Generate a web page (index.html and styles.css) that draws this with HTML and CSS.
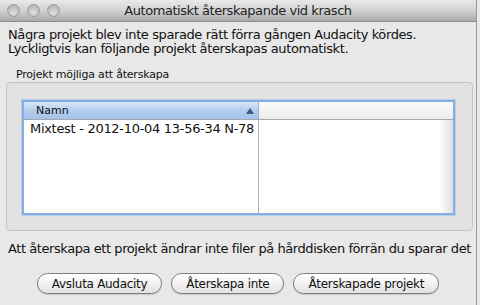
FILE: index.html
```html
<!doctype html>
<html>
<head>
<meta charset="utf-8">
<title>Automatiskt återskapande vid krasch</title>
<link rel="stylesheet" href="styles.css">
</head>
<body>

<div class="window">
    <div class="titlebar">
        <div class="lights">
            <span class="light"></span>
            <span class="light"></span>
            <span class="light"></span>
        </div>
        <div class="title">Automatiskt återskapande vid krasch</div>
    </div>

    <div class="content">
        <p class="intro">Några projekt blev inte sparade rätt förra gången Audacity kördes.<br>Lyckligtvis kan följande projekt återskapas automatiskt.</p>

        <div class="group-label">Projekt möjliga att återskapa</div>
        <div class="group">
            <div class="list">
                <div class="head">
                    <div class="col col-name">Namn <span class="sort"></span></div>
                    <div class="col col-rest"></div>
                </div>
                <div class="rows">
                    <div class="col col-name">Mixtest - 2012-10-04 13-56-34 N-78</div>
                    <div class="col col-rest"><span class="shade"></span></div>
                </div>
            </div>
        </div>

        <p class="note">Att återskapa ett projekt ändrar inte filer på hårddisken förrän du sparar det</p>

        <div class="buttons">
            <button type="button" class="btn">Avsluta Audacity</button>
            <button type="button" class="btn">Återskapa inte</button>
            <button type="button" class="btn">Återskapade projekt</button>
        </div>
    </div>
</div>

</body>
</html>
```

FILE: styles.css
```css
*{ margin: 0; padding: 0; box-sizing: border-box; }
body{ background: #e8e8e8; font-family: "DejaVu Sans", "Liberation Sans", sans-serif; color: #111; }

.window{ width: 477px; height: 305px; background: #e8e8e8; border-right: 1px solid #9a9a9a; }

/* 标题栏 */
.titlebar{ height: 22px; display: flex; align-items: center; background: linear-gradient(#e9e9e9, #d2d2d2 50%, #a9a9a9); border-bottom: 1px solid #8c8c8c; }
.lights{ display: flex; gap: 7px; padding-left: 7px; width: 120px; }
.light{ width: 13px; height: 13px; border-radius: 50%; background: radial-gradient(circle at 50% 70%, #e2e2e2, #b8b8b8 70%); border: 1px solid #9c9c9c; }
.title{ flex: 1; padding-right: 120px; text-align: center; font-size: 13px; letter-spacing: -0.45px; color: #222; white-space: nowrap; }

/* 内容区 */
.content{ padding: 6px 0 0 8px; }
.intro{ font-size: 13px; line-height: 14px; letter-spacing: -0.4px; }

.group-label{ margin: 12px 0 0 8px; font-size: 11px; line-height: 14px; letter-spacing: -0.2px; }
.group{ margin: 0 0 0 -2px; width: 467px; height: 149px; padding: 17px 17px 15px 15px; border: 1px solid #c4c4c4; border-radius: 4px; background: #e2e2e2; }

.list{ height: 115px; background: #fff; border: 2px solid #86aee0; box-shadow: 0 0 0 1px #b8cdea; display: flex; flex-direction: column; }
.head{ height: 18px; display: flex; border-bottom: 1px solid #a8a8a8; font-size: 11px; line-height: 17px; }
.head .col-name{ position: relative; padding-left: 12px; background: linear-gradient(#d9e7f8, #b3cdee 50%, #a5c3ea); border-right: 1px solid #9ab0cc; }
.head .col-rest{ background: linear-gradient(#fbfbfb, #ececec); }
.sort{ position: absolute; right: 4px; top: 6px; width: 0; height: 0; border: 4px solid transparent; border-top: 0; border-bottom: 6px solid #3b5a87; }

.col{ white-space: nowrap; }
.col-name{ width: 235px; }
.col-rest{ flex: 1; display: flex; justify-content: flex-end; }

.rows{ flex: 1; display: flex; font-size: 13px; line-height: 16px; letter-spacing: -0.3px; }
.rows .col-name{ padding: 1px 0 0 6px; border-right: 1px solid #b4b4b4; }
.shade{ width: 14px; background: linear-gradient(to right, #fff, #dedede); }

.note{ margin-top: 11px; font-size: 13px; line-height: 14px; letter-spacing: -0.43px; white-space: nowrap; }

/* 按钮 */
.buttons{ display: flex; justify-content: center; gap: 9px; margin: 17px 0 0 -8px; }
.btn{ height: 21px; padding: 0 14px; border: 1px solid #7d7d7d; border-radius: 11px; background: linear-gradient(#ffffff, #f2f2f2 50%, #e2e2e2); font-family: inherit; font-size: 12px; letter-spacing: -0.3px; color: #111; box-shadow: 0 1px 1px rgba(0,0,0,.15); }
```
